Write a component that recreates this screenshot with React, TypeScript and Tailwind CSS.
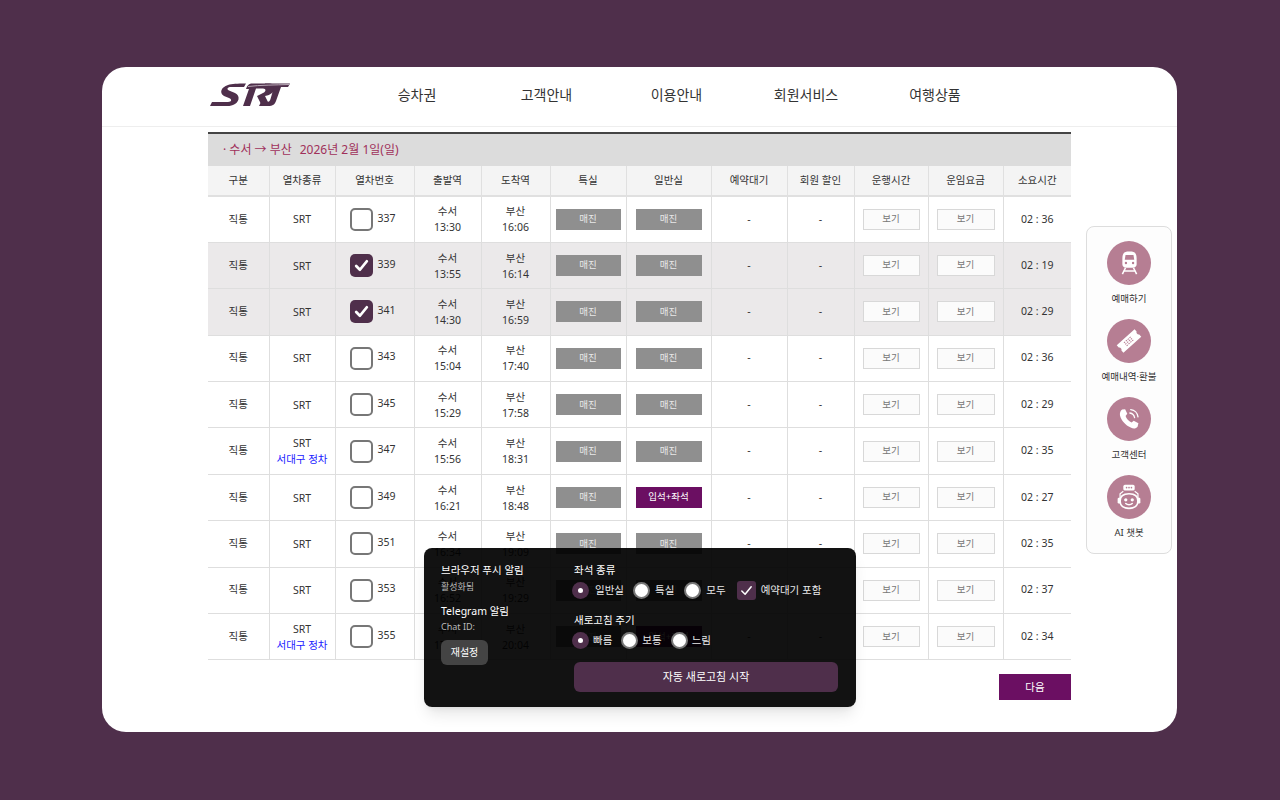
const font = { fontFamily: '"Noto Sans", "Noto Sans CJK KR", sans-serif' };

interface TrainRow {
  no: number;
  dep: string;
  arr: string;
  time: string;
  stop?: boolean;
  checked?: boolean;
  standing?: boolean;
}

const rows: TrainRow[] = [
  { no: 337, dep: '13:30', arr: '16:06', time: '02 : 36' },
  { no: 339, dep: '13:55', arr: '16:14', time: '02 : 19', checked: true },
  { no: 341, dep: '14:30', arr: '16:59', time: '02 : 29', checked: true },
  { no: 343, dep: '15:04', arr: '17:40', time: '02 : 36' },
  { no: 345, dep: '15:29', arr: '17:58', time: '02 : 29' },
  { no: 347, dep: '15:56', arr: '18:31', time: '02 : 35', stop: true },
  { no: 349, dep: '16:21', arr: '18:48', time: '02 : 27', standing: true },
  { no: 351, dep: '16:34', arr: '19:09', time: '02 : 35' },
  { no: 353, dep: '16:52', arr: '19:29', time: '02 : 37' },
  { no: 355, dep: '17:30', arr: '20:04', time: '02 : 34', stop: true, standing: true },
];

const headers = ['구분', '열차종류', '열차번호', '출발역', '도착역', '특실', '일반실', '예약대기', '회원 할인', '운행시간', '운임요금', '소요시간'];
const colWidths = ['w-[61px]', 'w-[66px]', 'w-[79px]', 'w-[67px]', 'w-[69px]', 'w-[76px]', 'w-[85px]', 'w-[76px]', 'w-[67px]', 'w-[74px]', 'w-[75px]', 'w-[68px]'];
const navItems = [
  { label: '승차권', width: 'w-[124px]' },
  { label: '고객안내', width: 'w-[135px]' },
  { label: '이용안내', width: 'w-[125px]' },
  { label: '회원서비스', width: 'w-[134px]' },
  { label: '여행상품', width: 'w-[124px]' },
];

function Logo() {
  return (
    <svg width="80" height="23" viewBox="0 0 80 23">
      <path d="M0 23 L2 19 L18 19 C22 19 22 16 19 15 L14 13 C9 10 11 4 18 2 C22 .8 27 .5 36 .5 L34 4 L21 4 C17 4 16.5 6.5 19 7.5 L25 10 C31 13 29 20 23 22 C21 23 18 23 15 23 Z" fill="#4f2f4b" />
      <path d="M33 23 L39 6 L36 6 C37 3 38 1.500 41 .5 L60 .5 C66 1 66 7 62 10 C60 11.500 58 12.500 55 13 L60 23 L52 23 L47 13 L53 10 C56 9 56.500 5.500 53 5.500 L46 5.500 L40 23 Z" fill="#4f2f4b" />
      <path d="M55 .5 L80 .5 L78 4 L71 4 L66 18 C65 21 63 23 58 23 L49 23 L51 19 L57 19 C59 19 60 18 60.500 16 L64 4 L54 4 Z" fill="#4f2f4b" />
      <path d="M38 3.500 C50 2 66 2 79 1.500" stroke="#b9a9b6" strokeWidth="1" fill="none" />
    </svg>
  );
}

function TrainIcon() {
  return (
    <svg width="19" height="24" viewBox="0 0 24 30" fill="#fff">
      <path d="M7 1 C9 .3 15 .3 17 1 C20 2 21 5 21 9 L21 17 C21 19 19 21 16 21 L8 21 C5 21 3 19 3 17 L3 9 C3 5 4 2 7 1 Z M7 5 L6 11 L18 11 L17 5 Z M6 15 A1.500 1.500 0 0 0 9 15 A1.500 1.500 0 0 0 6 15 Z M15 15 A1.500 1.500 0 0 0 18 15 A1.500 1.500 0 0 0 15 15 Z" fillRule="evenodd" />
      <path d="M7 21 L3 29 M17 21 L21 29 M4 25 L20 25" stroke="#fff" strokeWidth="2" fill="none" />
    </svg>
  );
}

function TicketIcon() {
  return (
    <svg width="26" height="26" viewBox="0 0 26 26">
      <g transform="rotate(-42 13 13)">
        <path d="M1 8 L25 8 L25 11 C23.500 11.500 23.500 14.500 25 15 L25 18 L1 18 L1 15 C2.500 14.500 2.500 11.500 1 11 Z" fill="#fff" />
        <path d="M8 11 L18 11 M8 13 L18 13 M8 15 L18 15" stroke="#b67e93" strokeWidth="1" strokeDasharray="1.500 1" />
      </g>
    </svg>
  );
}

function PhoneIcon() {
  return (
    <svg width="24" height="24" viewBox="0 0 28 28" fill="none">
      <path d="M6 3 L9.500 2.500 L12 8 L10 10.500 C11 13.500 13.500 16.500 17 18 L19.500 16 L25 19 L24 23 C22 25.500 19 25.500 16 24 C10 21.500 5 16 3.500 10 C3 7 4 4.500 6 3 Z" fill="#fff" />
      <path d="M15 7 C18 7.500 20 9.500 20.500 12.500 M16 3 C20.500 3.500 24 7 24.500 11.500" stroke="#fff" strokeWidth="1.500" strokeLinecap="round" />
    </svg>
  );
}

function BotIcon() {
  return (
    <svg width="26" height="26" viewBox="0 0 32 32" fill="none">
      <rect x="9" y="1" width="14" height="7" rx="2" fill="#fff" />
      <circle cx="13" cy="4.500" r="1" fill="#b67e93" />
      <circle cx="16" cy="4.500" r="1" fill="#b67e93" />
      <circle cx="19" cy="4.500" r="1" fill="#b67e93" />
      <path d="M5 19 L5 12 L9 9 M27 19 L27 12 L23 9" stroke="#fff" strokeWidth="1.500" />
      <rect x="2" y="17" width="4" height="7" rx="1.500" fill="#fff" />
      <rect x="26" y="17" width="4" height="7" rx="1.500" fill="#fff" />
      <path d="M16 12 C23 12 27 15 27 21 C27 27 22 30 16 30 C10 30 5 27 5 21 C5 15 9 12 16 12 Z" stroke="#fff" strokeWidth="2" />
      <circle cx="12" cy="19.500" r="2" fill="#fff" />
      <circle cx="20" cy="19.500" r="2" fill="#fff" />
      <path d="M12 24 C14 26 18 26 20 24" stroke="#fff" strokeWidth="1.800" strokeLinecap="round" />
    </svg>
  );
}

function CheckMark({ size, strokeWidth }: { size: number; strokeWidth: number }) {
  return (
    <svg width={size} height={size} viewBox="0 0 16 16" fill="none">
      <path d="M3 8.500 L6.500 12 L13 4" stroke="#fff" strokeWidth={strokeWidth} strokeLinecap="round" strokeLinejoin="round" />
    </svg>
  );
}

function Radio({ label, checked, gap }: { label: string; checked?: boolean; gap: string }) {
  return (
    <div className={`flex items-center ${gap}`}>
      {checked ? (
        <span className="flex h-[17px] w-[17px] items-center justify-center rounded-full bg-[#4f2f4b]">
          <span className="h-[5px] w-[5px] rounded-full bg-white" />
        </span>
      ) : (
        <span className="h-[17px] w-[17px] rounded-full border-2 border-[#777] bg-white" />
      )}
      <span className="text-[10.5px] leading-none text-[#e8e8e8]">{label}</span>
    </div>
  );
}

export default function App() {
  const side = [
    { label: '예매하기', icon: <TrainIcon /> },
    { label: '예매내역·환불', icon: <TicketIcon /> },
    { label: '고객센터', icon: <PhoneIcon /> },
    { label: 'AI 챗봇', icon: <BotIcon /> },
  ];

  return (
    <div className="flex h-screen w-full items-center justify-center bg-[#4f2f4b] pb-px pr-px" style={font}>
      <div className="relative h-[665px] w-[1075px] rounded-[24px] bg-white">
        {/* Header */}
        <div className="flex h-[60px] items-center border-b border-[#eeeeee] pb-[4px] pl-[108px]">
          <Logo />
          <nav className="ml-[65px] flex">
            {navItems.map((item) => (
              <div key={item.label} className={`${item.width} text-center text-[14px] text-[#333]`}>
                {item.label}
              </div>
            ))}
          </nav>
        </div>

        {/* Table */}
        <div className="ml-[106px] mt-[5px] w-[863px]">
          <div className="flex h-[34px] items-center gap-[8px] border-t-2 border-[#444] bg-[#dcdcdc] pl-[15px] text-[12px] text-[#a0305a]">
            <span>· 수서 → 부산</span>
            <span>2026년 2월 1일(일)</span>
          </div>
          <table className="w-full table-fixed border-collapse text-[10.5px] text-[#333]">
            <colgroup>
              {colWidths.map((w, i) => (
                <col key={i} className={w} />
              ))}
            </colgroup>
            <thead>
              <tr className="h-[30px] bg-[#f4f4f4]">
                {headers.map((h) => (
                  <th key={h} className="border-x border-b-2 border-[#e0e0e0] font-normal first:border-l-0 last:border-r-0">
                    {h}
                  </th>
                ))}
              </tr>
            </thead>
            <tbody>
              {rows.map((r) => (
                <tr key={r.no} className={`h-[46.4px] ${r.checked ? 'bg-[#ebe9ea]' : 'bg-white'}`}>
                  <td className="border border-l-0 border-[#dedede] text-center">직통</td>
                  <td className="border border-[#dedede] text-center leading-[16px]">
                    <div>SRT</div>
                    {r.stop && <div className="text-[#1a1aff]">서대구 정차</div>}
                  </td>
                  <td className="border border-[#dedede] pl-[14px]">
                    <div className="flex items-center gap-[5px]">
                      {r.checked ? (
                        <span className="flex h-[23px] w-[23px] items-center justify-center rounded-[5px] bg-[#4f2f4b]">
                          <CheckMark size={17} strokeWidth={2.6} />
                        </span>
                      ) : (
                        <span className="h-[23px] w-[23px] rounded-[5px] border-2 border-[#777] bg-white" />
                      )}
                      <span className="-mt-[2px]">{r.no}</span>
                    </div>
                  </td>
                  <td className="border border-[#dedede] text-center leading-[16px]">
                    <div>수서</div>
                    <div>{r.dep}</div>
                  </td>
                  <td className="border border-[#dedede] text-center leading-[16px]">
                    <div>부산</div>
                    <div>{r.arr}</div>
                  </td>
                  <td className="border border-[#dedede] px-[5px]">
                    <div className="flex h-[21px] items-center justify-center bg-[#8f8f8f] text-[9.5px] text-[#e8e8e8]">매진</div>
                  </td>
                  <td className="border border-[#dedede] px-[9px]">
                    {r.standing ? (
                      <div className="flex h-[21px] items-center justify-center bg-[#6b0f62] text-[9.5px] text-white">입석+좌석</div>
                    ) : (
                      <div className="flex h-[21px] items-center justify-center bg-[#8f8f8f] text-[9.5px] text-[#e8e8e8]">매진</div>
                    )}
                  </td>
                  <td className="border border-[#dedede] text-center">-</td>
                  <td className="border border-[#dedede] text-center">-</td>
                  <td className="border border-[#dedede] px-[8px]">
                    <div className="flex h-[21px] items-center justify-center border border-[#d8d8d8] bg-[#fbfbfb] text-[9.5px] text-[#777]">보기</div>
                  </td>
                  <td className="border border-[#dedede] px-[8px]">
                    <div className="flex h-[21px] items-center justify-center border border-[#d8d8d8] bg-[#fbfbfb] text-[9.5px] text-[#777]">보기</div>
                  </td>
                  <td className="border border-r-0 border-[#dedede] text-center">{r.time}</td>
                </tr>
              ))}
            </tbody>
          </table>
          <div className="mt-[14px] flex justify-end">
            <button className="h-[26px] w-[72px] bg-[#6b0f62] text-[10.5px] text-white">다음</button>
          </div>
        </div>

        {/* Side menu */}
        <div className="absolute left-[984px] top-[159px] flex h-[328px] w-[86px] flex-col items-center gap-[13px] rounded-[8px] border border-[#dddddd] bg-[#fdfdfd] pt-[14px]">
          {side.map((s) => (
            <div key={s.label} className="flex h-[65px] flex-col items-center">
              <div className="flex h-[44px] w-[44px] shrink-0 items-center justify-center rounded-full bg-[#b67e93]">{s.icon}</div>
              <div className="mt-[8px] whitespace-nowrap text-[9.5px] leading-[12px] text-[#333]">{s.label}</div>
            </div>
          ))}
        </div>

        {/* Auto refresh panel */}
        <div className="absolute left-[322px] top-[481px] flex h-[159px] w-[432px] rounded-[8px] bg-[#000000ed] py-[13px] pl-[17px] shadow-lg">
          <div className="w-[133px] pt-px">
            <div className="text-[10.5px] leading-[16px] text-white">브라우저 푸시 알림</div>
            <div className="mt-[2px] text-[9px] leading-[14px] text-[#bbbbbb]">활성화됨</div>
            <div className="mt-[9px] text-[10.5px] leading-[16px] text-white">Telegram 알림</div>
            <div className="mt-[1px] text-[9px] leading-[14px] text-[#bbbbbb]">Chat ID:</div>
            <button className="mt-[6px] h-[25px] w-[47px] rounded-[6px] bg-[#444444] text-[10px] text-white">재설정</button>
          </div>
          <div className="w-[264px] pt-px">
            <div className="text-[10.5px] leading-[16px] text-white">좌석 종류</div>
            <div className="-ml-[2px] mt-[2px] flex h-[20px] items-center">
              <Radio label="일반실" checked gap="gap-[6px]" />
              <div className="ml-[9px]"><Radio label="특실" gap="gap-[5px]" /></div>
              <div className="ml-[10px]"><Radio label="모두" gap="gap-[5px]" /></div>
              <div className="ml-[11px] flex items-center gap-[5px]">
                <span className="flex h-[19px] w-[19px] items-center justify-center rounded-[3px] bg-[#4f2f4b]">
                  <CheckMark size={15} strokeWidth={1.6} />
                </span>
                <span className="text-[10.5px] leading-none text-[#e8e8e8]">예약대기 포함</span>
              </div>
            </div>
            <div className="mt-[12px] text-[10.5px] leading-[16px] text-white">새로고침 주기</div>
            <div className="-ml-[2px] mt-[2px] flex h-[20px] items-center gap-[9px]">
              <Radio label="빠름" checked gap="gap-[4px]" />
              <Radio label="보통" gap="gap-[4px]" />
              <Radio label="느림" gap="gap-[4px]" />
            </div>
            <button className="mt-[12px] h-[30px] w-full rounded-[6px] bg-[#4f2f4b] text-[11px] text-white">자동 새로고침 시작</button>
          </div>
        </div>
      </div>
    </div>
  );
}
